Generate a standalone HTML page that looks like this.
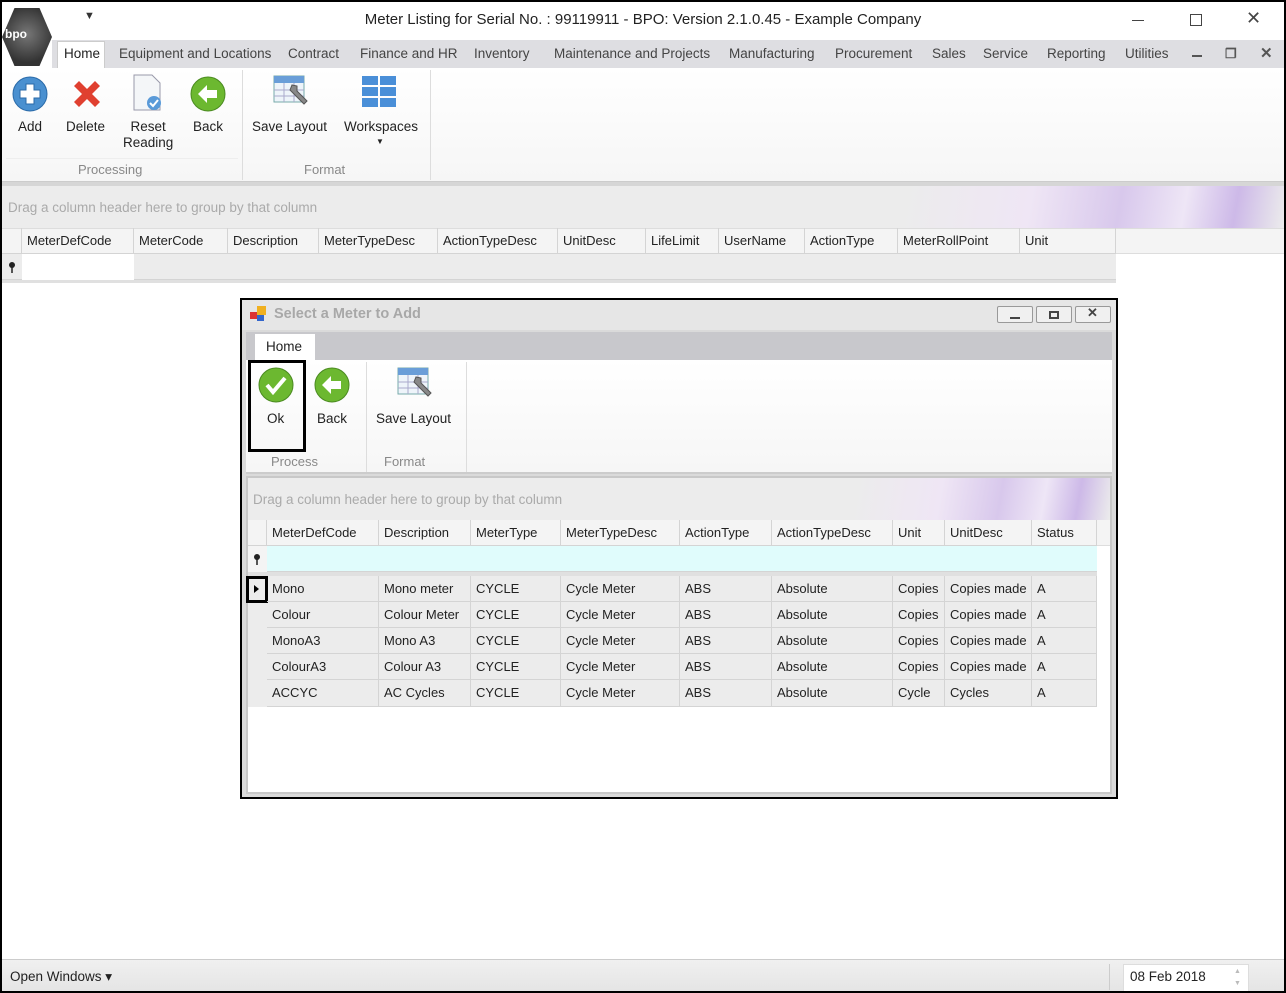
<!DOCTYPE html>
<html><head><meta charset="utf-8"><style>
*{box-sizing:border-box;margin:0;padding:0}
body{width:1286px;height:993px;position:relative;overflow:hidden;background:#fff;font-family:"Liberation Sans",sans-serif;font-size:13.5px;color:#222}
.a{position:absolute}
.frame{position:absolute;left:0;top:0;width:1286px;height:993px;border:2px solid #000;pointer-events:none;z-index:50}
.tab{position:absolute;top:46px;font-size:13.5px;color:#444}
.lbl{position:absolute;font-size:13.5px;color:#222;text-align:center}
.glbl{position:absolute;font-size:13px;color:#888}
.cell{position:absolute;border-right:1px solid #d4d4d4;border-bottom:1px solid #d4d4d4;padding-left:5px;white-space:nowrap;overflow:hidden;font-size:13px}
.swoosh{background:linear-gradient(100deg,#ececec 0%,#ececec 70%,#efe6f5 80%,#d8c8ec 87%,#eee6f6 92%,#cdb9e8 96%,#ececec 100%)}
</style></head><body>
<div class="frame"></div>
<div class="a" style="left:2px;top:8px;width:50px;height:58px;background:radial-gradient(circle at 50% 45%,#777,#333 70%);clip-path:polygon(25% 0,75% 0,100% 50%,75% 100%,25% 100%,0 50%)"></div>
<div class="a" style="left:5px;top:27px;font-size:12px;color:#fff;font-weight:bold;letter-spacing:0px">bpo</div>
<div class="a" style="left:84px;top:10px;font-size:11px;color:#333">&#9660;</div>
<div class="a" style="left:0;top:11px;width:1286px;text-align:center;font-size:15px;color:#222">Meter Listing for Serial No. : 99119911 - BPO: Version 2.1.0.45 - Example Company</div>
<div class="a" style="left:1132px;top:20px;width:12px;height:1px;background:#444"></div>
<div class="a" style="left:1190px;top:14px;width:12px;height:12px;border:1px solid #444"></div>
<div class="a" style="left:1246px;top:8px;font-size:18px;color:#444">&#x2715;</div>
<div class="a" style="left:52px;top:40px;width:1232px;height:28px;background:#dedee2"></div>
<div class="a" style="left:57px;top:41px;width:48px;height:28px;background:#fff;border:1px solid #ccc;border-bottom:none"></div>
<div class="tab" style="left:64px;color:#222">Home</div>
<div class="tab" style="left:119px">Equipment and Locations</div>
<div class="tab" style="left:288px">Contract</div>
<div class="tab" style="left:360px">Finance and HR</div>
<div class="tab" style="left:474px">Inventory</div>
<div class="tab" style="left:554px">Maintenance and Projects</div>
<div class="tab" style="left:729px">Manufacturing</div>
<div class="tab" style="left:835px">Procurement</div>
<div class="tab" style="left:932px">Sales</div>
<div class="tab" style="left:983px">Service</div>
<div class="tab" style="left:1047px">Reporting</div>
<div class="tab" style="left:1125px">Utilities</div>
<div class="a" style="left:1192px;top:55px;width:10px;height:2px;background:#555"></div>
<div class="a" style="left:1225px;top:46px;font-size:13px;color:#555;font-weight:bold">&#x2750;</div>
<div class="a" style="left:1260px;top:44px;font-size:15px;color:#555;font-weight:bold">&#x2715;</div>
<div class="a" style="left:2px;top:68px;width:1282px;height:114px;background:linear-gradient(#fff,#f6f6f6);border-bottom:1px solid #ccc"></div>
<div class="a" style="left:242px;top:70px;width:1px;height:110px;background:#ddd"></div>
<div class="a" style="left:430px;top:70px;width:1px;height:110px;background:#ddd"></div>
<div class="a" style="left:6px;top:158px;width:232px;height:1px;background:#eee"></div>
<svg class="a" style="left:12px;top:76px" width="36" height="36"><circle cx="18" cy="18" r="17" fill="#4a90d0" stroke="#2a6aa8"/><path d="M14 8h8v6h6v8h-6v6h-8v-6h-6v-8h6z" fill="#fff" stroke="#2a6aa8"/></svg>
<svg class="a" style="left:70px;top:77px" width="34" height="34"><path d="M4 9L9 4 17 12 25 4 30 9 22 17 30 25 25 30 17 22 9 30 4 25 12 17z" fill="#e04030"/></svg>
<svg class="a" style="left:131px;top:74px" width="34" height="38"><path d="M3 1h18l8 8v27H3z" fill="#f4f6f8" stroke="#99a"/><circle cx="23" cy="29" r="7" fill="#5a9ad8"/><path d="M19 29l3 3 5-6" stroke="#fff" stroke-width="2" fill="none"/></svg>
<svg class="a" style="left:190px;top:76px" width="36" height="36"><circle cx="18" cy="18" r="17" fill="#6cb830" stroke="#4a8a20"/><path d="M8 18l9-9v5h10v8H17v5z" fill="#fff"/></svg>
<div class="lbl" style="left:18px;top:119px">Add</div>
<div class="lbl" style="left:66px;top:119px">Delete</div>
<div class="lbl" style="left:123px;top:119px;line-height:16px">Reset<br>Reading</div>
<div class="lbl" style="left:193px;top:119px">Back</div>
<svg class="a" style="left:272px;top:74px" width="38" height="38"><rect x="2" y="2" width="30" height="26" fill="#eef4fa" stroke="#7aa"/><rect x="2" y="2" width="30" height="7" fill="#6a9ed8"/><path d="M12 9v19M22 9v19M2 16h30M2 22h30" stroke="#aac"/><path d="M18 16l4 4 10 10 3-3-10-10 0-5-5-1z" fill="#888" stroke="#555"/></svg>
<svg class="a" style="left:361px;top:74px" width="38" height="38"><g fill="#4a8fd8"><rect x="1" y="2" width="16" height="9"/><rect x="19" y="2" width="16" height="9"/><rect x="1" y="13" width="16" height="9"/><rect x="19" y="13" width="16" height="9"/><rect x="1" y="24" width="16" height="9"/><rect x="19" y="24" width="16" height="9"/></g></svg>
<div class="lbl" style="left:252px;top:119px">Save Layout</div>
<div class="lbl" style="left:344px;top:119px">Workspaces</div>
<div class="a" style="left:376px;top:137px;font-size:8px">&#9660;</div>
<div class="glbl" style="left:78px;top:162px">Processing</div>
<div class="glbl" style="left:304px;top:162px">Format</div>
<div class="a" style="left:2px;top:182px;width:1282px;height:4px;background:#d6d6d6"></div>
<div class="a swoosh" style="left:2px;top:186px;width:1282px;height:42px"></div>
<div class="a" style="left:8px;top:200px;font-size:13.5px;color:#aaa">Drag a column header here to group by that column</div>
<div class="a" style="left:2px;top:228px;width:1282px;height:26px;background:#f4f4f4;border-top:1px solid #ddd;border-bottom:1px solid #ddd"></div>
<div class="cell" style="left:2px;top:228px;width:20px;height:26px"></div>
<div class="cell" style="left:22px;top:228px;width:112px;height:26px;line-height:25px">MeterDefCode</div>
<div class="cell" style="left:134px;top:228px;width:94px;height:26px;line-height:25px">MeterCode</div>
<div class="cell" style="left:228px;top:228px;width:91px;height:26px;line-height:25px">Description</div>
<div class="cell" style="left:319px;top:228px;width:119px;height:26px;line-height:25px">MeterTypeDesc</div>
<div class="cell" style="left:438px;top:228px;width:120px;height:26px;line-height:25px">ActionTypeDesc</div>
<div class="cell" style="left:558px;top:228px;width:88px;height:26px;line-height:25px">UnitDesc</div>
<div class="cell" style="left:646px;top:228px;width:73px;height:26px;line-height:25px">LifeLimit</div>
<div class="cell" style="left:719px;top:228px;width:86px;height:26px;line-height:25px">UserName</div>
<div class="cell" style="left:805px;top:228px;width:93px;height:26px;line-height:25px">ActionType</div>
<div class="cell" style="left:898px;top:228px;width:122px;height:26px;line-height:25px">MeterRollPoint</div>
<div class="cell" style="left:1020px;top:228px;width:96px;height:26px;line-height:25px">Unit</div>
<div class="a" style="left:2px;top:254px;width:1114px;height:26px;background:#ececec;border-bottom:1px solid #d4d4d4"></div>
<div class="a" style="left:22px;top:254px;width:112px;height:26px;background:#fff"></div>
<svg class="a" style="left:8px;top:262px" width="8" height="11"><circle cx="4" cy="3" r="3" fill="#222"/><path d="M4 5v6" stroke="#222" stroke-width="1.5"/></svg>
<div class="a" style="left:2px;top:280px;width:1114px;height:3px;background:#e0e0e0"></div>
<!-- dialog -->
<div class="a" style="left:240px;top:298px;width:878px;height:501px;border:2px solid #000;background:#dadada"></div>
<div class="a" style="left:242px;top:300px;width:874px;height:30px;background:#e6e6e6"></div>
<svg class="a" style="left:250px;top:306px" width="18" height="16"><rect x="0" y="6" width="7" height="7" fill="#d33"/><rect x="7" y="0" width="9" height="9" fill="#f0b020"/><rect x="7" y="9" width="7" height="6" fill="#36c"/></svg>
<div class="a" style="left:274px;top:306px;font-size:14.5px;font-weight:bold;color:#a8a8a8">Select a Meter to Add</div>
<div class="a" style="left:997px;top:306px;width:36px;height:17px;border:1px solid #999;border-radius:2px;background:#f0f0f0"></div>
<div class="a" style="left:1036px;top:306px;width:36px;height:17px;border:1px solid #999;border-radius:2px;background:#f0f0f0"></div>
<div class="a" style="left:1075px;top:306px;width:36px;height:17px;border:1px solid #999;border-radius:2px;background:#f0f0f0"></div>
<div class="a" style="left:1010px;top:317px;width:10px;height:2px;background:#444"></div>
<div class="a" style="left:1049px;top:311px;width:10px;height:8px;border:2px solid #444"></div>
<div class="a" style="left:1087px;top:305px;font-size:13px;font-weight:bold;color:#444">&#x2715;</div>
<div class="a" style="left:246px;top:332px;width:866px;height:28px;background:#c8c8cc"></div>
<div class="a" style="left:255px;top:334px;width:60px;height:26px;background:#fff"></div>
<div class="a" style="left:266px;top:339px;font-size:13.5px">Home</div>
<div class="a" style="left:246px;top:360px;width:866px;height:114px;background:linear-gradient(#fff,#f6f6f6);border-bottom:2px solid #ccc"></div>
<div class="a" style="left:366px;top:362px;width:1px;height:110px;background:#ddd"></div>
<div class="a" style="left:466px;top:362px;width:1px;height:110px;background:#ddd"></div>
<div class="a" style="left:248px;top:360px;width:58px;height:92px;border:3px solid #000"></div>
<svg class="a" style="left:258px;top:367px" width="36" height="36"><circle cx="18" cy="18" r="17" fill="#6cb830" stroke="#4a8a20"/><path d="M9 18l6 7 12-14" stroke="#fff" stroke-width="4" fill="none"/></svg>
<svg class="a" style="left:314px;top:367px" width="36" height="36"><circle cx="18" cy="18" r="17" fill="#6cb830" stroke="#4a8a20"/><path d="M8 18l9-9v5h10v8H17v5z" fill="#fff"/></svg>
<svg class="a" style="left:396px;top:366px" width="38" height="38"><rect x="2" y="2" width="30" height="26" fill="#eef4fa" stroke="#7aa"/><rect x="2" y="2" width="30" height="7" fill="#6a9ed8"/><path d="M12 9v19M22 9v19M2 16h30M2 22h30" stroke="#aac"/><path d="M18 16l4 4 10 10 3-3-10-10 0-5-5-1z" fill="#888" stroke="#555"/></svg>
<div class="lbl" style="left:267px;top:411px">Ok</div>
<div class="lbl" style="left:317px;top:411px">Back</div>
<div class="lbl" style="left:376px;top:411px">Save Layout</div>
<div class="glbl" style="left:271px;top:454px">Process</div>
<div class="glbl" style="left:384px;top:454px">Format</div>
<div class="a" style="left:246px;top:476px;width:866px;height:318px;background:#fff;border:2px solid #c8c8c8"></div>
<div class="a swoosh" style="left:248px;top:478px;width:862px;height:42px"></div>
<div class="a" style="left:253px;top:492px;font-size:13.5px;color:#aaa">Drag a column header here to group by that column</div>
<div class="a" style="left:248px;top:520px;width:862px;height:26px;background:#f4f4f4;border-bottom:1px solid #ddd"></div>
<div class="cell" style="left:248px;top:520px;width:19px;height:26px"></div>
<div class="cell" style="left:267px;top:520px;width:112px;height:26px;line-height:25px">MeterDefCode</div>
<div class="cell" style="left:379px;top:520px;width:92px;height:26px;line-height:25px">Description</div>
<div class="cell" style="left:471px;top:520px;width:90px;height:26px;line-height:25px">MeterType</div>
<div class="cell" style="left:561px;top:520px;width:119px;height:26px;line-height:25px">MeterTypeDesc</div>
<div class="cell" style="left:680px;top:520px;width:92px;height:26px;line-height:25px">ActionType</div>
<div class="cell" style="left:772px;top:520px;width:121px;height:26px;line-height:25px">ActionTypeDesc</div>
<div class="cell" style="left:893px;top:520px;width:52px;height:26px;line-height:25px">Unit</div>
<div class="cell" style="left:945px;top:520px;width:87px;height:26px;line-height:25px">UnitDesc</div>
<div class="cell" style="left:1032px;top:520px;width:65px;height:26px;line-height:25px">Status</div>
<div class="a" style="left:267px;top:546px;width:830px;height:26px;background:#e0fcfc;border-bottom:1px solid #d4d4d4"></div>
<div class="a" style="left:248px;top:546px;width:19px;height:26px;background:#f4f4f4"></div>
<svg class="a" style="left:253px;top:554px" width="8" height="11"><circle cx="4" cy="3" r="3" fill="#222"/><path d="M4 5v6" stroke="#222" stroke-width="1.5"/></svg>
<div class="a" style="left:248px;top:572px;width:849px;height:4px;background:#e0e0e0"></div>
<div class="a" style="left:248px;top:576px;width:849px;height:131px;background:#ececec"></div>
<div class="a" style="left:246px;top:576px;width:22px;height:27px;border:3px solid #000"></div>
<div class="a" style="left:254px;top:585px;width:0;height:0;border-left:5px solid #000;border-top:4px solid transparent;border-bottom:4px solid transparent"></div>
<div class="cell" style="left:267px;top:576px;width:112px;height:26px;line-height:26px">Mono</div><div class="cell" style="left:379px;top:576px;width:92px;height:26px;line-height:26px">Mono meter</div><div class="cell" style="left:471px;top:576px;width:90px;height:26px;line-height:26px">CYCLE</div><div class="cell" style="left:561px;top:576px;width:119px;height:26px;line-height:26px">Cycle Meter</div><div class="cell" style="left:680px;top:576px;width:92px;height:26px;line-height:26px">ABS</div><div class="cell" style="left:772px;top:576px;width:121px;height:26px;line-height:26px">Absolute</div><div class="cell" style="left:893px;top:576px;width:52px;height:26px;line-height:26px">Copies</div><div class="cell" style="left:945px;top:576px;width:87px;height:26px;line-height:26px">Copies made</div><div class="cell" style="left:1032px;top:576px;width:65px;height:26px;line-height:26px">A</div>
<div class="cell" style="left:267px;top:602px;width:112px;height:26px;line-height:26px">Colour</div><div class="cell" style="left:379px;top:602px;width:92px;height:26px;line-height:26px">Colour Meter</div><div class="cell" style="left:471px;top:602px;width:90px;height:26px;line-height:26px">CYCLE</div><div class="cell" style="left:561px;top:602px;width:119px;height:26px;line-height:26px">Cycle Meter</div><div class="cell" style="left:680px;top:602px;width:92px;height:26px;line-height:26px">ABS</div><div class="cell" style="left:772px;top:602px;width:121px;height:26px;line-height:26px">Absolute</div><div class="cell" style="left:893px;top:602px;width:52px;height:26px;line-height:26px">Copies</div><div class="cell" style="left:945px;top:602px;width:87px;height:26px;line-height:26px">Copies made</div><div class="cell" style="left:1032px;top:602px;width:65px;height:26px;line-height:26px">A</div>
<div class="cell" style="left:267px;top:628px;width:112px;height:26px;line-height:26px">MonoA3</div><div class="cell" style="left:379px;top:628px;width:92px;height:26px;line-height:26px">Mono A3</div><div class="cell" style="left:471px;top:628px;width:90px;height:26px;line-height:26px">CYCLE</div><div class="cell" style="left:561px;top:628px;width:119px;height:26px;line-height:26px">Cycle Meter</div><div class="cell" style="left:680px;top:628px;width:92px;height:26px;line-height:26px">ABS</div><div class="cell" style="left:772px;top:628px;width:121px;height:26px;line-height:26px">Absolute</div><div class="cell" style="left:893px;top:628px;width:52px;height:26px;line-height:26px">Copies</div><div class="cell" style="left:945px;top:628px;width:87px;height:26px;line-height:26px">Copies made</div><div class="cell" style="left:1032px;top:628px;width:65px;height:26px;line-height:26px">A</div>
<div class="cell" style="left:267px;top:654px;width:112px;height:26px;line-height:26px">ColourA3</div><div class="cell" style="left:379px;top:654px;width:92px;height:26px;line-height:26px">Colour A3</div><div class="cell" style="left:471px;top:654px;width:90px;height:26px;line-height:26px">CYCLE</div><div class="cell" style="left:561px;top:654px;width:119px;height:26px;line-height:26px">Cycle Meter</div><div class="cell" style="left:680px;top:654px;width:92px;height:26px;line-height:26px">ABS</div><div class="cell" style="left:772px;top:654px;width:121px;height:26px;line-height:26px">Absolute</div><div class="cell" style="left:893px;top:654px;width:52px;height:26px;line-height:26px">Copies</div><div class="cell" style="left:945px;top:654px;width:87px;height:26px;line-height:26px">Copies made</div><div class="cell" style="left:1032px;top:654px;width:65px;height:26px;line-height:26px">A</div>
<div class="cell" style="left:267px;top:680px;width:112px;height:27px;line-height:26px">ACCYC</div><div class="cell" style="left:379px;top:680px;width:92px;height:27px;line-height:26px">AC Cycles</div><div class="cell" style="left:471px;top:680px;width:90px;height:27px;line-height:26px">CYCLE</div><div class="cell" style="left:561px;top:680px;width:119px;height:27px;line-height:26px">Cycle Meter</div><div class="cell" style="left:680px;top:680px;width:92px;height:27px;line-height:26px">ABS</div><div class="cell" style="left:772px;top:680px;width:121px;height:27px;line-height:26px">Absolute</div><div class="cell" style="left:893px;top:680px;width:52px;height:27px;line-height:26px">Cycle</div><div class="cell" style="left:945px;top:680px;width:87px;height:27px;line-height:26px">Cycles</div><div class="cell" style="left:1032px;top:680px;width:65px;height:27px;line-height:26px">A</div>
<div class="a" style="left:2px;top:959px;width:1282px;height:34px;background:linear-gradient(#f0f0f0,#e4e4e4);border-top:1px solid #ccc"></div>
<div class="a" style="left:10px;top:969px;font-size:13.5px">Open Windows &#9662;</div>
<div class="a" style="left:1109px;top:964px;width:1px;height:26px;background:#ccc"></div>
<div class="a" style="left:1123px;top:964px;width:126px;height:28px;background:#fff;border:1px solid #ddd"></div>
<div class="a" style="left:1130px;top:969px;font-size:13.5px">08 Feb 2018</div>
<div class="a" style="left:1234px;top:966px;font-size:7px;color:#bbb;line-height:12px">&#9650;<br>&#9660;</div>
</body></html>
